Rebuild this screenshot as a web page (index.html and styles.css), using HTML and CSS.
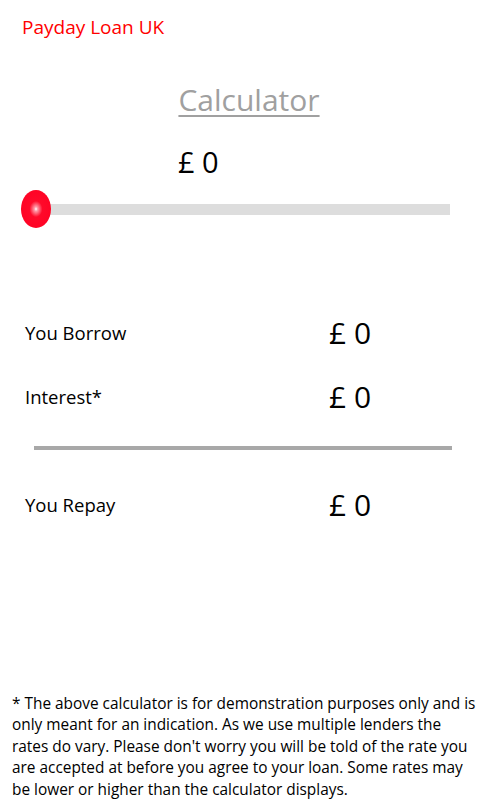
FILE: index.html
```html
<!DOCTYPE html>
<html lang="en">
  <head>
    <title> Payday Loan UK </title>
    <meta charset="utf-8">
    <link rel="stylesheet" href="styles.css">
  </head>
  <body>
    <div class="app-title">Payday Loan UK</div>
    <h1 class="calc-title">Calculator</h1>
    <div class="amount">£ 0</div>
    <div class="slider">
      <div class="track"></div>
      <div class="thumb"></div>
    </div>
    <div class="results">
      <div class="row">
        <span class="label">You Borrow</span>
        <span class="value">£ 0</span>
      </div>
      <div class="row">
        <span class="label">Interest*</span>
        <span class="value">£ 0</span>
      </div>
      <hr class="divider">
      <div class="row">
        <span class="label">You Repay</span>
        <span class="value">£ 0</span>
      </div>
    </div>
    <p class="note">* The above calculator is for demonstration purposes only and is only meant for an indication. As we use multiple lenders the rates do vary. Please don't worry you will be told of the rate you are accepted at before you agree to your loan. Some rates may be lower or higher than the calculator displays.</p>
  </body>
</html>
```
FILE: styles.css
```css
html, body {
  margin: 0;
  height: 810px;
}
body {
  display: flex;
  flex-direction: column;
  background: #ffffff;
  color: #000000;
  font-family: "Open Sans", "Noto Sans", sans-serif;
  overflow: hidden;
}
.app-title {
  color: #ff0000;
  font-size: 19px;
  padding: 13px 0 0 22px;
  line-height: 28px;
}
.calc-title {
  margin: 40px 0 0 0;
  text-align: center;
  font-size: 30px;
  font-weight: normal;
  color: #a0a0a0;
  text-decoration: underline;
  text-decoration-thickness: 2px;
  text-underline-offset: 4px;
  line-height: 38px;
  padding-left: 12px;
}
.amount {
  margin: 27px 0 0 178px;
  font-size: 29px;
  line-height: 32px;
}
.slider {
  position: relative;
  margin: 12px 0 0 21px;
  height: 38px;
  width: 430px;
  display: flex;
  align-items: center;
}
.track {
  margin-left: 29px;
  width: 400px;
  height: 11px;
  background: #dddddd;
}
.thumb {
  position: absolute;
  left: 0;
  top: 0;
  width: 30px;
  height: 38px;
  border-radius: 50%;
  background: radial-gradient(ellipse at 50% 50%, #ffffff 0, #ff9aa8 8%, #ff0a2a 30%, #ff0022 100%);
}
.results {
  display: flex;
  flex-direction: column;
  margin-top: 84px;
}
.row {
  display: grid;
  grid-template-columns: 304px 1fr;
  align-items: center;
  padding-left: 25px;
  height: 40px;
  margin-bottom: 24px;
}
.label {
  font-size: 18.5px;
}
.value {
  font-size: 30px;
}
.divider {
  margin: 6px 34px 34px 34px;
  border: none;
  height: 4px;
  background: #a8a8a8;
}
.note {
  margin: auto 10px 10px 12px;
  font-size: 15.4px;
  line-height: 21.5px;
}
```
